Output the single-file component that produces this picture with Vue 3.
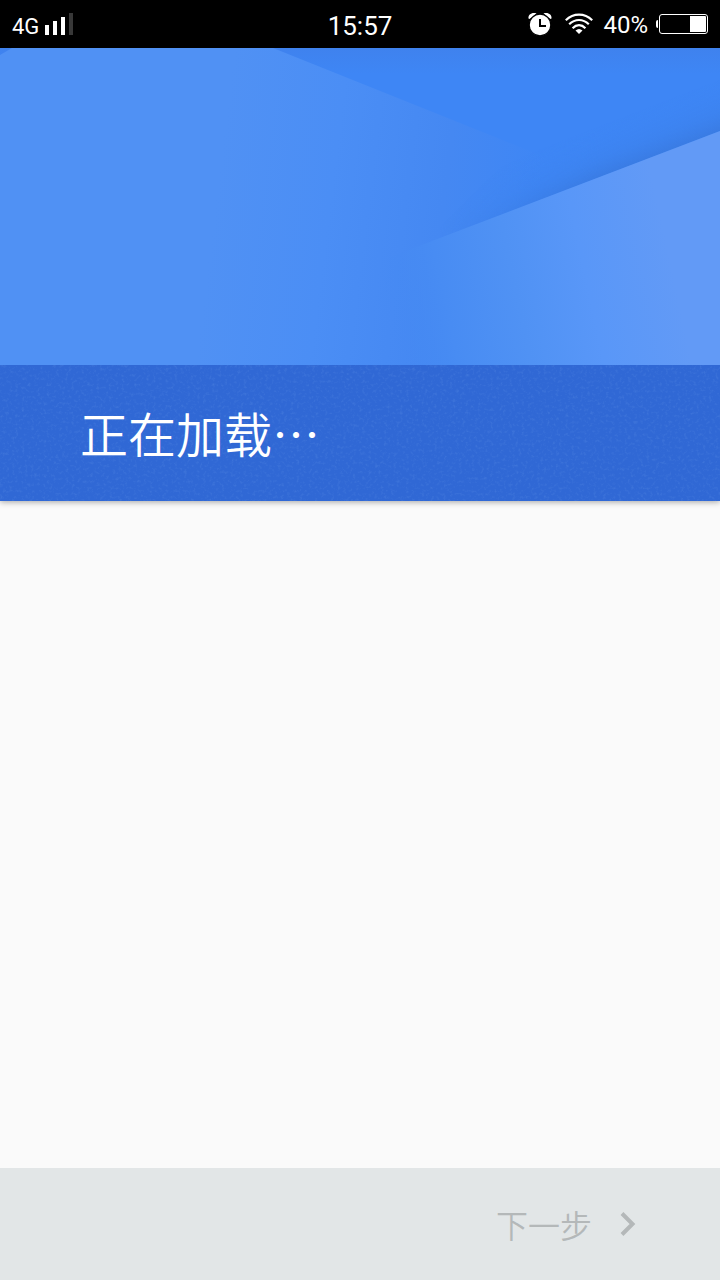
<script setup>
const title = '正在加载⋯'
const nextLabel = '下一步'
</script>

<template>
  <div class="screen">
    <header class="status">
      <div class="side">
        <span class="network">4G</span>
        <svg class="signal" width="28" height="24" viewBox="0 0 28 24" aria-hidden="true">
          <path fill="#fff" d="M0 13h4v10H0zM8 9h4v14H8zM16 5h4v18h-4z" />
          <path fill="#383838" d="M24 1h4v22h-4z" />
        </svg>
      </div>
      <time class="clock">15:57</time>
      <div class="side end">
        <svg class="alarm" width="24" height="24" viewBox="0 0 24 24" aria-hidden="true">
          <path d="M.5 6.500C0 2.500 4 0 8.500 1.500L1.500 7zM23.500 6.500C24 2.500 20 0 15.500 1.500L22.500 7z" fill="#fff" />
          <circle cx="12" cy="13" r="10.800" fill="#fff" stroke="#000" stroke-width="1.200" />
          <path d="M12 7v7h6" fill="none" stroke="#000" stroke-width="2" />
        </svg>
        <svg class="wifi" width="28" height="22" viewBox="0 0 28 22" aria-hidden="true">
          <g fill="none" stroke="#fff" stroke-width="2.200">
            <path d="M.8 7.200C8.500-.2 19.500-.2 27.200 7.200" />
            <path d="M4.200 11.200C10 5.600 18 5.600 23.800 11.200" />
            <path d="M7.600 15.200C11.500 11.200 16.500 11.200 20.400 15.200" />
          </g>
          <path d="M10.500 17.500Q14 14.500 17.500 17.500L14 21z" fill="#fff" />
        </svg>
        <span class="percent">40%</span>
        <svg class="battery" width="52" height="20" viewBox="0 0 52 20" aria-hidden="true">
          <path d="M2 6Q0 6 0 8v4q0 2 2 2z" fill="#fff" />
          <rect x="3.500" y=".5" width="48" height="19" rx="2.500" fill="none" stroke="#fff" />
          <path d="M34 2h15q1 0 1 1v14q0 1-1 1H34z" fill="#fff" />
        </svg>
      </div>
    </header>

    <section class="hero">
      <svg class="art" viewBox="0 0 720 317" preserveAspectRatio="none" aria-hidden="true">
        <defs>
          <linearGradient id="leftFace" gradientUnits="userSpaceOnUse" x1="220" y1="120" x2="540" y2="160">
            <stop offset="0" stop-color="#5091f4" />
            <stop offset=".35" stop-color="#4b8ef5" />
            <stop offset=".7" stop-color="#4588f2" />
            <stop offset="1" stop-color="#3e86f5" />
          </linearGradient>
          <linearGradient id="rightFace" gradientUnits="userSpaceOnUse" x1="390" y1="270" x2="670" y2="210">
            <stop offset="0" stop-color="#4489f3" stop-opacity="0" />
            <stop offset=".2" stop-color="#488cf3" />
            <stop offset=".45" stop-color="#5092f4" />
            <stop offset=".7" stop-color="#5997f8" />
            <stop offset="1" stop-color="#629af6" />
          </linearGradient>
          <linearGradient id="shade" gradientUnits="userSpaceOnUse" x1="640" y1="113" x2="623" y2="69">
            <stop offset="0" stop-color="#3a7ce4" />
            <stop offset=".35" stop-color="#3c81ec" stop-opacity=".6" />
            <stop offset="1" stop-color="#3e86f5" stop-opacity="0" />
          </linearGradient>
          <linearGradient id="fade" gradientUnits="userSpaceOnUse" x1="440" y1="0" x2="600" y2="0">
            <stop offset="0" stop-color="#000" />
            <stop offset="1" stop-color="#fff" />
          </linearGradient>
          <mask id="fadeMask" maskUnits="userSpaceOnUse" x="0" y="0" width="720" height="317">
            <path d="M0 0h720v317H0z" fill="url(#fade)" />
          </mask>
          <linearGradient id="topShade" x1="0" y1="0" x2="0" y2="1">
            <stop offset="0" stop-color="#3f82ee" />
            <stop offset="1" stop-color="#3e86f5" />
          </linearGradient>
        </defs>
        <path d="M0 0h720v317H0z" fill="#3e86f5" />
        <path d="M0 0h720v26H0z" fill="url(#topShade)" />
        <path d="M0 7L12 0H273L560 115V317H0z" fill="url(#leftFace)" />
        <path d="M420 198L500 120L720 16V83z" fill="url(#shade)" mask="url(#fadeMask)" />
        <path d="M390 209L720 83V317H370z" fill="url(#rightFace)" />
      </svg>
      <div class="band">
        <svg class="grain" aria-hidden="true">
          <filter id="speckle" x="0" y="0" width="100%" height="100%">
            <feTurbulence type="fractalNoise" baseFrequency=".32" numOctaves="3" seed="8" />
            <feColorMatrix values="0 0 0 0 .34  0 0 0 0 .58  0 0 0 0 .96  2 0 0 0 -1" />
          </filter>
          <rect width="100%" height="100%" filter="url(#speckle)" />
        </svg>
        <h1 class="title">{{ title }}</h1>
      </div>
    </section>

    <main class="content"></main>

    <footer class="footer">
      <button class="next" type="button" disabled>
        <span>{{ nextLabel }}</span>
        <svg width="16" height="24" viewBox="0 0 16 24" aria-hidden="true">
          <path d="M2 1.500L12.500 12 2 22.500" fill="none" stroke="#b4b8b9" stroke-width="4" />
        </svg>
      </button>
    </footer>
  </div>
</template>

<style>
body {
  margin: 0;
}
</style>

<style scoped>
.screen {
  display: flex;
  flex-direction: column;
  min-height: 100vh;
  background: #fafafa;
  font-family: Roboto, "Noto Sans CJK SC", sans-serif;
}
.status {
  display: grid;
  grid-template-columns: 1fr auto 1fr;
  align-items: center;
  height: 48px;
  padding: 0 12px;
  background: #000;
  color: #fff;
}
.side {
  display: flex;
  align-items: center;
}
.end {
  justify-content: flex-end;
}
.network {
  margin-top: 6px;
  font-size: 22px;
  line-height: 26px;
}
.signal {
  margin-left: 6px;
}
.clock {
  margin-top: 4px;
  font-size: 26px;
  line-height: 32px;
}
.wifi {
  margin-left: 13px;
}
.percent {
  margin: 2px 8px 0 10px;
  font-size: 24px;
  line-height: 28px;
}
.hero {
  position: relative;
  box-shadow: 0 1px 6px rgba(0, 0, 0, 0.35);
}
.art {
  display: block;
  width: 100%;
  height: 317px;
}
.band {
  position: relative;
  padding: 35px 80px 37px;
  background: #3068d5;
}
.grain {
  position: absolute;
  inset: 0;
  width: 100%;
  height: 100%;
  opacity: 0.15;
}
.title {
  position: relative;
  margin: 0;
  color: #fff;
  font-family: "Noto Sans CJK SC", sans-serif;
  font-size: 48px;
  font-weight: 350;
  line-height: 64px;
}
.content {
  flex: 1;
}
.footer {
  display: flex;
  justify-content: flex-end;
  align-items: center;
  height: 112px;
  padding-right: 84px;
  background: #e2e6e7;
}
.next {
  display: flex;
  align-items: center;
  gap: 28px;
  padding: 0;
  border: 0;
  background: none;
  color: #b4b8b9;
  font-family: "Noto Sans CJK SC", sans-serif;
  font-size: 32px;
  font-weight: 350;
  line-height: 48px;
}
</style>
